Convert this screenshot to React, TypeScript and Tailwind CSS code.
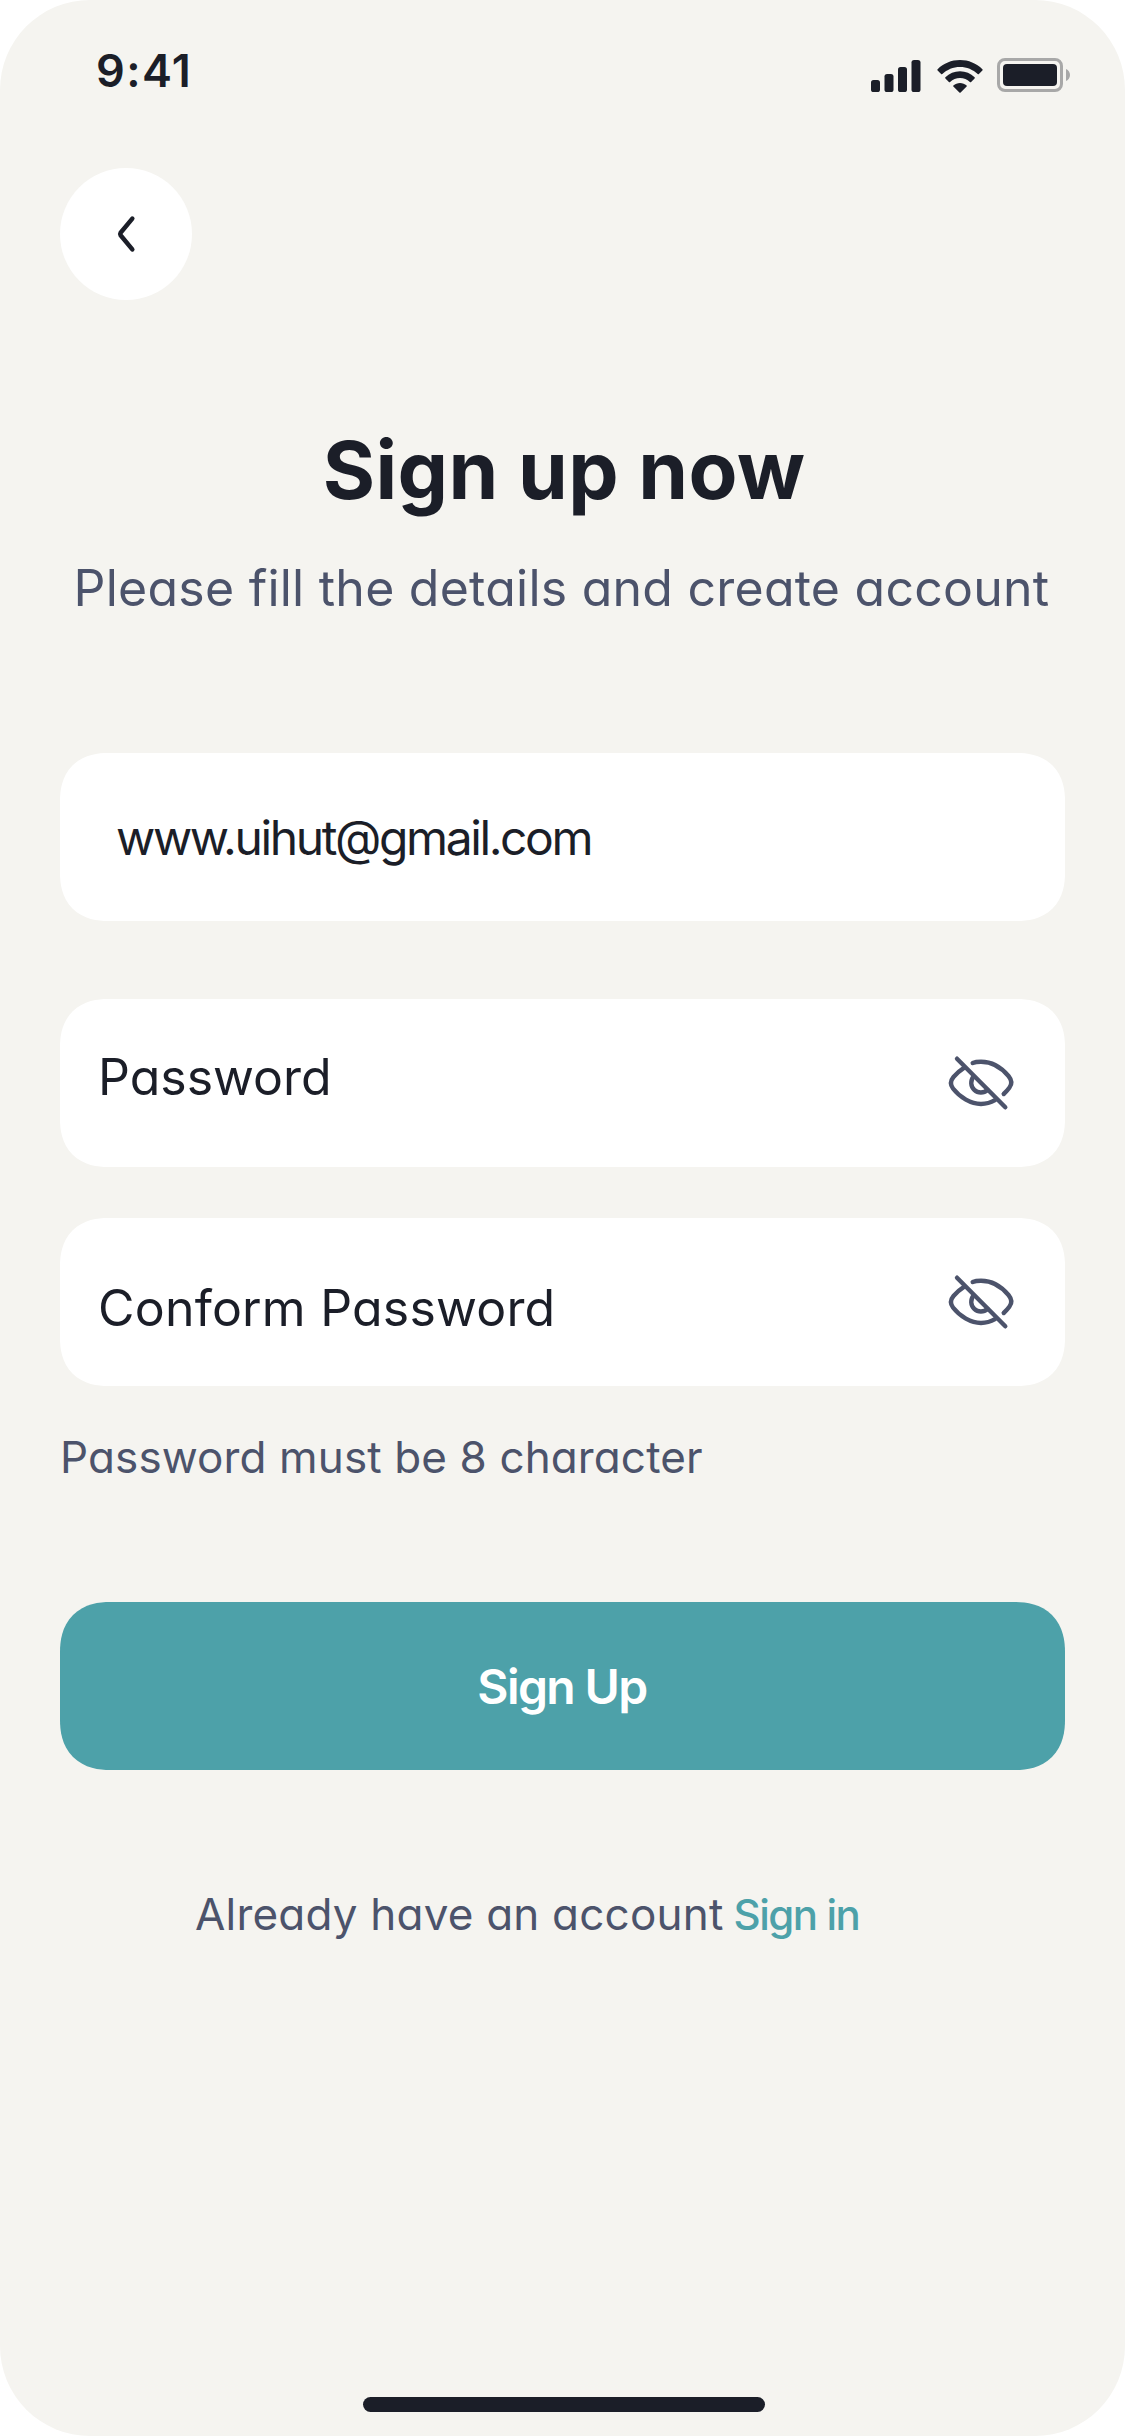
import type { ReactNode } from "react";

function SignalIcon() {
  return (
    <svg width="50" height="32" viewBox="0 0 50 32" fill="#1b1e28">
      <rect x="0" y="20" width="9" height="12" rx="2.6" />
      <rect x="13.5" y="14" width="9" height="18" rx="2.6" />
      <rect x="27" y="7" width="9" height="25" rx="2.6" />
      <rect x="40.5" y="0" width="9" height="32" rx="2.6" />
    </svg>
  );
}

function WifiIcon() {
  return (
    <svg width="46" height="33" viewBox="0 0 46 33" fill="#1b1e28">
      <path d="M0.6 9.2C6.6 3.3 14.4 0 23 0S39.4 3.3 45.4 9.2Q46 9.8 45.4 10.4L41.9 14Q41.3 14.6 40.7 14C36 9.5 29.8 6.9 23 6.9S10 9.5 5.3 14Q4.7 14.6 4.1 14L0.6 10.4Q0 9.8 0.6 9.2Z" />
      <path d="M8.4 17.2C12.3 13.5 17.4 11.3 23 11.3S33.7 13.5 37.6 17.2Q38.2 17.8 37.6 18.4L34.1 22Q33.5 22.5 32.9 22C30.2 19.6 26.8 18.1 23 18.1S15.8 19.6 13.1 22Q12.5 22.5 11.9 22L8.4 18.4Q7.8 17.8 8.4 17.2Z" />
      <path d="M16.4 25.4C18.2 23.9 20.5 22.9 23 22.9S27.8 23.9 29.6 25.4Q30.2 25.9 29.6 26.5L23.6 32.5Q23 33 22.4 32.5L16.4 26.5Q15.8 25.9 16.4 25.4Z" />
    </svg>
  );
}

function BatteryIcon() {
  return (
    <svg width="73" height="34" viewBox="0 0 73 34">
      <rect x="1.5" y="1.5" width="63" height="31" rx="6.5" fill="none" stroke="#a8a8a8" strokeWidth="3" />
      <rect x="6" y="6" width="54" height="22" rx="4" fill="#1b1e28" />
      <path d="M69 11C71.6 12.2 73 14.4 73 17S71.6 21.8 69 23Z" fill="#a8a8a8" />
    </svg>
  );
}

function EyeOffIcon() {
  return (
    <svg
      width="72"
      height="62"
      viewBox="0 0 72 62"
      fill="none"
      stroke="#4c536b"
      strokeWidth="4.4"
      strokeLinecap="round"
      strokeLinejoin="round"
    >
      <path d="M27.7 11C30 10 33 9.7 36 9.7C46 9.7 56 15 63.5 24C67 28.3 67.2 32 64.5 35.5Q62 39 58.7 42" />
      <path d="M19.3 15.7C15 18.5 12 21 8.5 25C5.3 28.8 5 32.5 8 36.5C15 45.5 26 52 36 52C41 52 45.5 50.8 50 48.2" />
      <path d="M28.5 24.7A9.6 9.6 0 0 0 42.5 37.8" />
      <path d="M12 6.7L60.3 55.3" />
    </svg>
  );
}

function Field({ className, children }: { className: string; children: ReactNode }) {
  return (
    <div
      className={`flex h-[168px] rounded-[48px] bg-white leading-none text-[#1b1e28] [corner-shape:superellipse(1.2)] ${className}`}
    >
      {children}
    </div>
  );
}

export default function App() {
  return (
    <div className="bg-white">
      <main className="flex h-[2436px] w-[1125px] flex-col rounded-[90px] bg-[#f5f4f0] px-[60px] font-['Inter',sans-serif] text-[#4c536b]">
        <header className="flex h-[168px] items-start justify-between">
          <span className="ml-[36px] mt-[40px] text-[45px] leading-[62px] font-semibold tracking-[1.4px] text-[#1b1e28]">
            9:41
          </span>
          <div className="-mr-[5px] mt-[58px] flex h-[36px] items-start">
            <div className="mt-[2px]">
              <SignalIcon />
            </div>
            <div className="ml-[16px] mt-[2px]">
              <WifiIcon />
            </div>
            <div className="ml-[14px]">
              <BatteryIcon />
            </div>
          </div>
        </header>

        <button className="flex size-[132px] items-center justify-center rounded-full bg-white" aria-label="Back">
          <svg width="20" height="38" viewBox="0 0 20 38" fill="none" stroke="#1b1e28" strokeWidth="4.5" strokeLinecap="round" strokeLinejoin="round">
            <path d="M16.3 3.6L4.6 17.7Q3.8 19 4.6 20.3L16.3 34.4" />
          </svg>
        </button>

        <div className="mt-[122px] flex flex-col items-center [font-feature-settings:'cv11']">
          <h1 className="ml-[3px] text-[80px] leading-[96px] font-[650] tracking-[0.4px] whitespace-nowrap text-[#1b1e28]">
            Sign up now
          </h1>
          <p className="mr-[2px] mt-[38px] text-[50px] leading-[64px] tracking-[0.24px] whitespace-nowrap">
            Please fill the details and create account
          </p>
        </div>

        <div className="mt-[133px] flex flex-col">
          <Field className="items-center pt-[2px] pl-[56px] text-5xl tracking-[-2.4px]">www.uihut@gmail.com</Field>
          <Field className="mt-[78px] justify-between pr-[48px] pl-[38px] text-[50px] [font-feature-settings:'cv11']">
            <span className="mt-[53px]">Password</span>
            <span className="mt-[53px]">
              <EyeOffIcon />
            </span>
          </Field>
          <Field className="mt-[51px] justify-between pr-[48px] pl-[38px] text-[50px] [font-feature-settings:'cv11']">
            <span className="mt-[65px] tracking-[0.2px]">Conform Password</span>
            <span className="mt-[53px]">
              <EyeOffIcon />
            </span>
          </Field>
        </div>

        <p className="mt-[43px] text-[44px] leading-[56px] tracking-[0.12px] [font-feature-settings:'cv11']">
          Password must be 8 character
        </p>

        <button className="mt-[117px] flex h-[168px] shrink-0 items-center justify-center rounded-[50px] bg-[#4da1a9] pt-[2px] pr-[1px] text-5xl font-semibold tracking-[-1.6px] text-white [corner-shape:superellipse(1.2)]">
          Sign Up
        </button>

        <p className="mt-[116px] flex items-baseline gap-[10px] pl-[135px] leading-[56px] whitespace-nowrap">
          <span className="text-[44px] tracking-[0.2px] [font-feature-settings:'cv11']">Already have an account</span>
          <a className="text-[42px] font-medium tracking-[-1.45px] text-[#4da1a9]">Sign in</a>
        </p>

        <div className="mt-auto mb-[24px] ml-[303px] h-[15px] w-[402px] rounded-full bg-[#1b1e28]" />
      </main>
    </div>
  );
}
